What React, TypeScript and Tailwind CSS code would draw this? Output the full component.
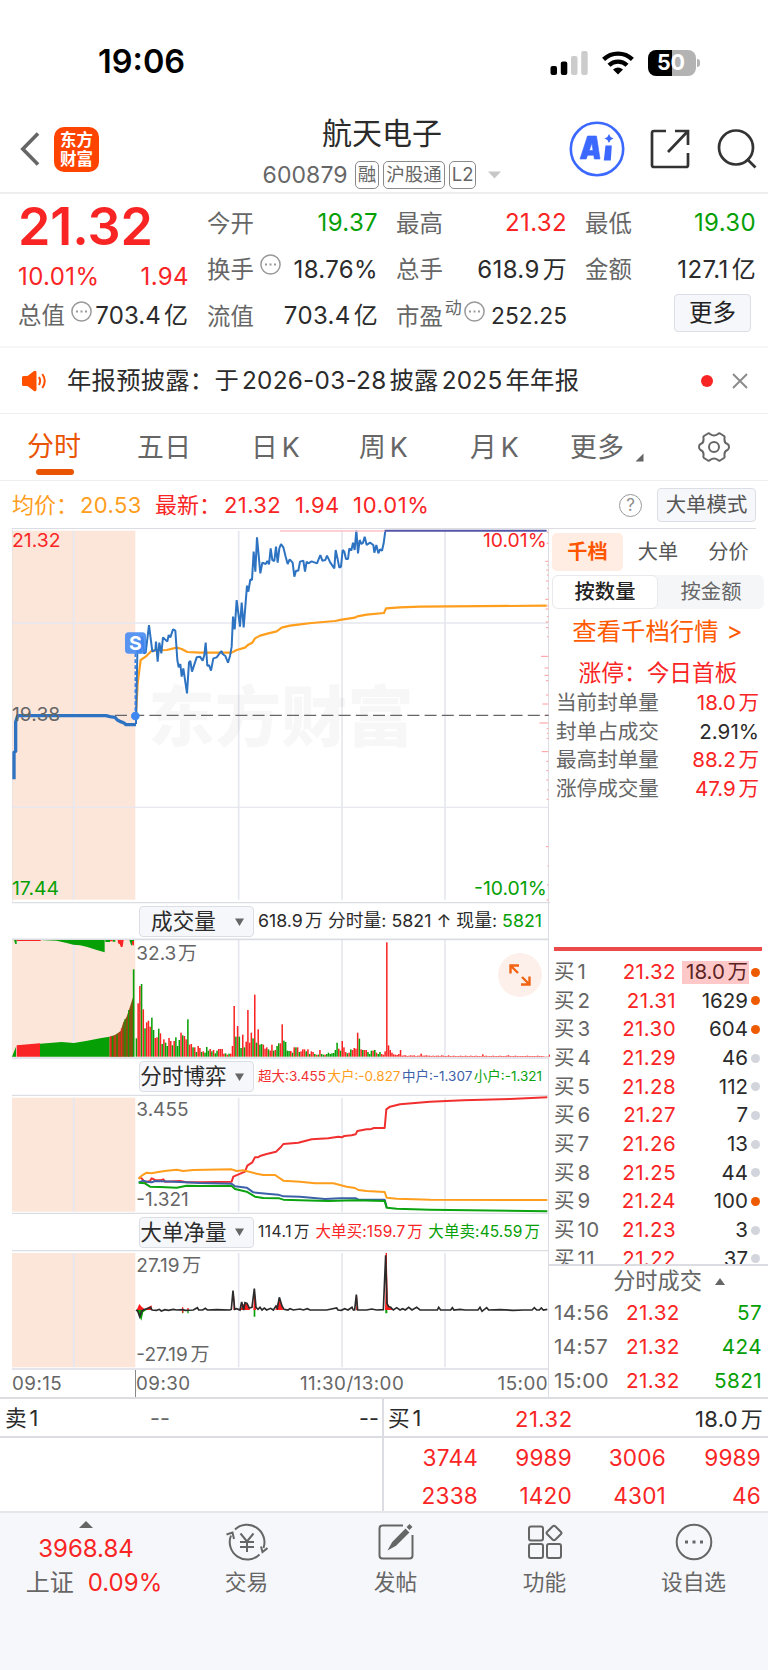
import type { ReactNode } from 'react'
import clsx from 'clsx'

type Tone = 'up' | 'down' | 'text'

const TONES: Record<Tone, string> = {
  up: 'text-[#f92525]',
  down: 'text-[#06a006]',
  text: 'text-[#2b2b2b]',
}

const BUY_ORDERS = [
  { level: 1, price: '21.32', volume: '18.0万', hot: true },
  { level: 2, price: '21.31', volume: '1629', hot: true },
  { level: 3, price: '21.30', volume: '604', hot: true },
  { level: 4, price: '21.29', volume: '46', hot: false },
  { level: 5, price: '21.28', volume: '112', hot: false },
  { level: 6, price: '21.27', volume: '7', hot: false },
  { level: 7, price: '21.26', volume: '13', hot: false },
  { level: 8, price: '21.25', volume: '44', hot: false },
  { level: 9, price: '21.24', volume: '100', hot: true },
  { level: 10, price: '21.23', volume: '3', hot: false },
  { level: 11, price: '21.22', volume: '37', hot: false },
]

const SEAL_STATS: { label: string; value: string; tone: Tone }[] = [
  { label: '当前封单量', value: '18.0万', tone: 'up' },
  { label: '封单占成交', value: '2.91%', tone: 'text' },
  { label: '最高封单量', value: '88.2万', tone: 'up' },
  { label: '涨停成交量', value: '47.9万', tone: 'up' },
]

const TRADES = [
  { time: '14:56', price: '21.32', volume: '57' },
  { time: '14:57', price: '21.32', volume: '424' },
  { time: '15:00', price: '21.32', volume: '5821' },
]

const QUEUE = ['3744', '9989', '3006', '9989', '2338', '1420', '4301', '46']

// Chart units are a third of a pixel, x runs from 36 to 1650
const GRID_X = [221, 716, 1026, 1335]

const PRE_PRICE = '42,778 42,697 47,694 47,606 53,587 318,587 330,590 345,592 352,600 362,605 372,609 378,614 408,614'

const PRICE =
  '408,612 410,500 412,400 416,360 421,400 427,350 432,400 437,398 447,315 457,395 466,390 468,365 473,425 478,368 484,400 489,352 502,365 506,345 511,352 519,328 526,332 532,420 536,442 541,432 545,470 550,445 561,520 567,427 571,423 576,455 590,412 600,410 608,422 613,405 617,368 622,438 627,435 633,452 640,415 650,412 664,393 668,402 676,408 684,428 690,408 695,380 699,290 704,328 710,240 720,320 725,248 731,322 741,197 745,215 751,178 756,180 761,95 766,155 771,52 781,160 787,128 797,132 802,123 807,133 812,85 817,120 823,123 828,80 833,128 838,85 843,72 850,82 857,110 863,132 869,118 878,128 883,170 888,152 895,152 900,125 910,122 915,155 920,125 925,130 935,124 951,130 961,105 967,122 976,120 981,107 991,128 1003,145 1007,90 1013,118 1018,143 1023,140 1028,90 1033,95 1038,117 1044,117 1048,85 1054,92 1059,68 1064,90 1069,30 1074,100 1079,60 1084,72 1089,68 1094,50 1100,75 1110,68 1120,75 1123,98 1129,75 1135,100 1140,88 1146,92 1151,70 1156,32'

const AVERAGE =
  '408,586 413,490 422,420 437,410 455,392 500,390 530,383 545,387 562,396 600,398 695,398 710,390 735,383 745,374 757,368 765,355 780,347 805,340 830,334 845,323 870,317 900,313 935,309 1005,303 1025,299 1065,293 1072,289 1100,284 1152,279 1158,265 1200,262 1260,260 1640,257'

const PRICE_TICKS = [
  [37, 4], [70, 5], [124, 9], [135, 4], [150, 6], [165, 4], [183, 7], [205, 4], [238, 9], [258, 5], [267, 8], [290, 4],
  [306, 8], [323, 7], [350, 4], [409, 22], [444, 11], [466, 11], [482, 7], [525, 7], [552, 18], [586, 12], [609, 27],
  [626, 5], [640, 4], [655, 5], [695, 20], [724, 6], [752, 6], [780, 6], [810, 4], [838, 5], [980, 7], [1038, 3],
  [1095, 4], [1140, 5],
]

// One entry per minute: bar height, then r or g
const VOLUME =
  '55g 160r 212r 218g 142r 85g 103r 108r 90r 117g 80g 56r 58r 84g 70r 38g 52r 42g 32g 56r 47r 34g 47r 58g 32g 50g 72r 64g 62r 52r 112g 36r 38r 28g 28r 14g 32r 26r 14g 16r 12g 29g 18g 23r 16g 20r 10g 18g 23r 23r 23r 9r 10g 6r 9g 9r 32r 152r 60g 92r 60g 26g 66r 28g 45r 140r 42r 72r 55g 186r 42g 82r 36g 38g 36r 24r 28r 22g 18r 36r 18g 20r 32g 40g 40r 97r 48g 44g 18g 17g 17r 12g 28r 28g 28r 14g 16r 22r 22r 16g 22r 8g 16r 14r 8g 6r 6g 20r 8g 6g 6r 8g 12g 8g 10g 11g 20g 42g 24r 18g 47r 28r 14r 10g 12r 22g 20r 26r 24r 72r 54g 22r 20g 20r 20r 14g 8g 18g 18r 20g 12r 8g 14g 8r 6r 16r 343r 34r 20r 12r 7r 6r 5r 8r 20r 3r 4r 4r 2r 3r 4r 3r 4r 2r 3r 3r 9r 3r 3r 4r 3r 3r 2r 3r 2r 3r 3r 2r 4r 3r 2r 2r 4r 2r 2r 3r 2r 2r 2r 3r 2r 2r 3r 2r 2r 3r 2r 2r 3r 2r 2r 2r 7r 2r 3r 2r 2r 2r 3r 2r 2r 2r 3r 2r 2r 2r 3r 4r 2r 2r 2r 3r 2r 2r 2r 2r 2r 2r 3r 2r 2r 2r 2r 2r 3r 2r 2r 2r 1r 1r 1r 6r'

const FLOWS = [
  {
    color: '#f12f2f',
    points:
      '416,847 425,850 435,862 450,858 455,850 465,855 480,856 490,853 495,860 540,858 560,862 600,862 695,860 700,845 735,830 742,812 757,802 765,787 775,787 780,783 800,777 828,770 842,757 850,747 895,743 935,733 985,730 1015,725 1025,727 1033,723 1055,721 1067,718 1072,708 1100,703 1110,703 1122,699 1154,699 1159,643 1170,635 1200,628 1290,620 1390,616 1530,612 1642,607',
  },
  {
    color: '#ff9d1c',
    points:
      '416,852 425,842 440,833 455,835 470,832 500,827 530,824 550,828 580,825 695,823 710,828 730,826 770,836 790,840 825,840 840,850 850,857 900,860 945,865 1000,865 1040,875 1065,879 1075,885 1100,888 1154,891 1160,908 1190,911 1290,914 1642,915',
  },
  {
    color: '#3c61a8',
    points:
      '416,862 430,857 440,860 455,862 465,858 540,861 600,864 695,866 705,874 740,878 760,892 800,896 835,899 850,904 900,905 975,912 1020,910 1068,910 1075,914 1154,914 1160,937',
  },
  {
    color: '#0ba30f',
    points:
      '416,863 435,865 450,875 480,876 530,878 560,872 600,873 695,873 705,882 740,890 765,905 790,909 838,910 850,914 900,916 985,918 1065,916 1154,918 1160,938 1190,941 1290,944 1642,949',
  },
]

const NET =
  '408,60 413,63 419,80 425,64 431,59 440,56 452,52 456,60 470,61 478,58 484,63 495,59 505,61 520,58 530,60 548,59 556,61 580,60 592,53 596,60 608,60 616,55 622,60 650,59 690,60 694,58 699,2 704,58 710,56 720,60 725,36 731,60 735,38 741,40 748,54 756,52 763,-4 768,52 774,58 780,52 786,60 793,54 800,60 812,55 820,60 828,48 832,54 838,22 846,48 852,58 864,60 870,56 880,60 900,57 910,60 922,56 930,60 980,60 1010,54 1014,60 1024,61 1034,56 1044,60 1056,52 1060,60 1064,60 1069,14 1073,60 1100,60 1115,57 1130,60 1150,59 1157,-104 1161,40 1166,50 1172,52 1180,60 1190,53 1200,60 1208,56 1216,60 1226,52 1236,60 1250,52 1260,60 1270,60 1312,60 1316,52 1322,60 1352,60 1357,53 1362,60 1380,58 1395,60 1434,60 1440,52 1446,64 1460,53 1466,60 1500,59 1540,61 1570,60 1596,60 1603,53 1610,60 1618,60 1624,54 1630,60 1642,58'

function StatusBar() {
  return (
    <div className="flex h-[104px] items-center pt-[21px] pl-[98px]">
      <span className="w-[452px] text-[32.5px] leading-none font-semibold text-black">19:06</span>
      <svg width="38" height="24" viewBox="0 0 38 24">
        <rect x="0.5" y="15" width="6.5" height="9" rx="2" fill="#000" />
        <rect x="10.8" y="10.5" width="6.5" height="13.5" rx="2" fill="#000" />
        <rect x="21" y="5" width="6.5" height="19" rx="2" fill="#ccc" />
        <rect x="31.2" y="0" width="6.5" height="24" rx="2" fill="#ccc" />
      </svg>
      <svg className="ml-[14px]" width="32" height="24" viewBox="0 0 32 24" fill="none" stroke="#000" strokeWidth="4.3">
        <path d="M1.6 8.4A20.6 20.6 0 0 1 30.4 8.4" />
        <path d="M7 14.3A12.9 12.9 0 0 1 25 14.3" />
        <path d="M11 18.6Q16 14.6 21 18.6L16 23.6Z" fill="#000" stroke="none" />
      </svg>
      <div className="relative ml-[14px] flex h-[26px] w-[48px] items-center justify-center rounded-[8px] bg-[linear-gradient(90deg,#000_50%,#b3b3b3_50%)] pr-[2px] text-[21.5px] leading-none font-bold text-white">
        50
        <span className="absolute top-[9px] -right-[4px] h-[8px] w-[3px] rounded-r-full bg-[#b3b3b3]" />
      </div>
    </div>
  )
}

function Tag({ children }: { children: ReactNode }) {
  return (
    <span className="flex h-[28px] items-center rounded-[5px] border border-[#8a8a8a] px-[2px] text-[18.5px] text-[#666]">
      {children}
    </span>
  )
}

function NavBar() {
  return (
    <div className="grid h-[90px] grid-cols-[200px_1fr_200px] border-b-2 border-[#eee]">
      <div className="flex items-center pt-[2px] pl-[20px]">
        <svg width="20" height="34" viewBox="0 0 20 34" fill="none" stroke="#666" strokeWidth="3.6">
          <path d="M18 1.5L2.8 17L18 32.5" />
        </svg>
        <div className="ml-[14px] flex size-[45px] flex-col items-center justify-center rounded-[10px] bg-[#ff4400] font-['Noto_Sans_CJK_SC',sans-serif] text-[16.5px] leading-[19px] font-bold text-white">
          <span>东方</span>
          <span>财富</span>
        </div>
      </div>
      <div className="flex flex-col items-center pt-[9px] pr-[4px]">
        <h1 className="text-[30px] leading-[40px] text-[#2b2b2b]">航天电子</h1>
        <div className="mt-[5px] flex items-center gap-[4px]">
          <span className="mr-[3px] text-[23px] tracking-[0.1px] text-[#666]">600879</span>
          <Tag>融</Tag>
          <Tag>沪股通</Tag>
          <Tag>L2</Tag>
          <svg className="ml-[8px]" width="13" height="8" viewBox="0 0 13 8">
            <path d="M0 0.5H13L6.5 7.5Z" fill="#c8c8c8" />
          </svg>
        </div>
      </div>
      <div className="flex items-center justify-end pt-[2px] pr-[11px]">
        <svg width="56" height="56" viewBox="0 0 56 56">
          <circle cx="28" cy="28" r="26.2" fill="#fff" stroke="#3b68ff" strokeWidth="2.6" />
          <path
            d="M18.5 15H27.5L31 38H25.3L24.8 34.3H18.6L17.2 38H11ZM22.9 22L20.3 29.5H24Z"
            fill="#3b68ff"
            fillRule="evenodd"
            stroke="#3b68ff"
            strokeWidth="0.6"
            strokeLinejoin="round"
          />
          <path d="M36.5 24.5H42.8L41.8 39.5H34.8Z" fill="#3b68ff" />
          <path d="M40 13L41.6 15.9L44.5 17.5L41.6 19.1L40 22L38.4 19.1L35.5 17.5L38.4 15.9Z" fill="#3b68ff" />
        </svg>
        <svg className="ml-[25px]" width="40" height="40" viewBox="0 0 40 40" fill="none" stroke="#333" strokeWidth="2.7">
          <path d="M16 2H4Q2 2 2 4V36Q2 38 4 38H36Q38 38 38 36V24" />
          <path d="M25 2H38V16M38 2L18 23" />
        </svg>
        <svg className="ml-[27px]" width="40" height="40" viewBox="0 0 40 40" fill="none" stroke="#333" strokeWidth="2.7">
          <circle cx="19" cy="18.5" r="17" />
          <path d="M30 30L38.5 38.5" />
        </svg>
      </div>
    </div>
  )
}

function InfoDots() {
  return (
    <svg width="21" height="21" viewBox="0 0 21 21" fill="none" className="shrink-0">
      <circle cx="10.5" cy="10.5" r="9.6" stroke="#999" strokeWidth="1.5" />
      <path d="M5 9.4h2v2h-2zM9.5 9.4h2v2h-2zM14 9.4h2v2h-2z" fill="#999" />
    </svg>
  )
}

function Quote({ label, value, tone = 'text', small }: { label: ReactNode; value: string; tone?: Tone; small?: boolean }) {
  return (
    <div className="-mr-px flex h-[46.5px] items-center justify-between">
      <span className="flex items-center text-[23.4px] text-[#666]">{label}</span>
      <span className={clsx(small ? 'text-[22.8px]' : 'text-[24px] tracking-[0.35px]', TONES[tone])}>{value}</span>
    </div>
  )
}

function QuotePanel() {
  return (
    <div className="grid h-[154px] grid-cols-[repeat(4,170px)] gap-x-[19px] border-b-2 border-[#f6f6f6] pt-[6px] pl-[18px] leading-none">
      <div>
        <div className="flex h-[53px] items-center text-[52px] font-semibold tracking-[-0.1px] text-[#f92525]">21.32</div>
        <div className="-mr-px flex h-[47px] items-center justify-between text-[24px] tracking-[0.4px] text-[#f92525]">
          <span>10.01%</span>
          <span>1.94</span>
        </div>
        <div className="flex h-[32px] items-center justify-between text-[24px] tracking-[0.1px]">
          <span className="flex items-center gap-[6px] text-[23.4px] text-[#666]">
            总值
            <span className="pb-[10px]"><InfoDots /></span>
          </span>
          <span className="text-[#2b2b2b]">703.4亿</span>
        </div>
      </div>
      <div>
        <Quote label="今开" value="19.37" tone="down" />
        <Quote
          label={
            <>
              换手<span className="ml-[6px] pb-[10px]"><InfoDots /></span>
            </>
          }
          value="18.76%"
        />
        <Quote label="流值" value="703.4亿" />
      </div>
      <div>
        <Quote label="最高" value="21.32" tone="up" />
        <Quote label="总手" value="618.9万" />
        <Quote
          label={
            <>
              市盈
              <span className="ml-[2px] pb-[15px] text-[17px]">动</span>
              <span className="ml-[2px] pb-[10px]"><InfoDots /></span>
            </>
          }
          value="252.25"
          small
        />
      </div>
      <div>
        <Quote label="最低" value="19.30" tone="down" />
        <Quote label="金额" value="127.1亿" />
        <button className="mt-px ml-auto mr-[4px] flex h-[38px] w-[77px] items-center justify-center rounded-[4px] border border-[#dcdee5] bg-[#f6f7fa] text-[23.5px] text-[#222]">
          更多
        </button>
      </div>
    </div>
  )
}

function Notice() {
  return (
    <div className="flex h-[66px] items-center border-b border-[#eee] pl-[21px]">
      <svg width="26" height="22" viewBox="0 0 26 22">
        <path d="M1 7.5Q1 6 2.5 6H6.5L13 1Q15.5 0 15.5 2.5V19.5Q15.5 22 13 21L6.5 16H2.5Q1 16 1 14.5Z" fill="#ff5000" />
        <path d="M18 7Q20.2 11 18 15M21.3 4Q26.2 11 21.3 18" fill="none" stroke="#ff5000" strokeWidth="2" />
      </svg>
      <p className="ml-[20px] w-[634px] text-[24.3px] tracking-[0.27px] text-[#2b2b2b]">年报预披露：于2026-03-28披露2025年年报</p>
      <span className="size-[12px] rounded-full bg-[#f92525]" />
      <svg className="ml-[19px]" width="16" height="16" viewBox="0 0 16 16" stroke="#8c8c8c" strokeWidth="2">
        <path d="M1 1L15 15M15 1L1 15" />
      </svg>
    </div>
  )
}

function PeriodTabs() {
  return (
    <div className="flex h-[67px] items-center border-b border-[#eee] pl-[27px] text-[26.8px] tracking-[0.5px] text-[#666]">
      <div className="relative flex h-full w-[110px] items-center text-[27px] tracking-normal text-[#ea5504]">
        分时
        <span className="absolute bottom-[5px] left-[9px] h-[6px] w-[38px] rounded-full bg-[#ea5504]" />
      </div>
      <span className="w-[114px]">五日</span>
      <span className="w-[108px]">日K</span>
      <span className="w-[111px]">周K</span>
      <span className="w-[100px]">月K</span>
      <span className="w-[56px]">更多</span>
      <svg className="mt-[21px] ml-[9px]" width="9" height="9" viewBox="0 0 9 9">
        <path d="M8.5 0.5V8.5H0.5Z" fill="#666" />
      </svg>
      <svg className="ml-[54px]" width="32" height="30" viewBox="0 0 32 30" fill="none" stroke="#666" strokeWidth="2">
        <path d="M10 1.5Q11 1 12 2Q16 5 20 2Q21 1 22 1.5L26 4Q27 5 26.5 6.2Q26 11 29.5 12Q31 12.8 31 15Q31 17.2 29.5 18Q26 19 26.5 23.8Q27 25 26 26L22 28.5Q21 29 20 28Q16 25 12 28Q11 29 10 28.5L6 26Q5 25 5.5 23.8Q6 19 2.5 18Q1 17.2 1 15Q1 12.8 2.5 12Q6 11 5.5 6.2Q5 5 6 4Z" />
        <circle cx="16" cy="15" r="5" />
      </svg>
    </div>
  )
}

function PriceLegend() {
  return (
    <div className="flex h-[47px] items-center pt-px pl-[12px] text-[22px] tracking-[0.4px] text-[#f92525]">
      <span className="w-[68px] tracking-normal text-[#ff9d1c]">均价：</span>
      <span className="w-[75px] text-[#ff9d1c]">20.53</span>
      <span className="w-[69px] tracking-normal">最新：</span>
      <span className="w-[71px]">21.32</span>
      <span className="w-[58px]">1.94</span>
      <span className="w-[266px] tracking-[0.7px]">10.01%</span>
      <span className="flex size-[23px] items-center justify-center rounded-full border-[1.5px] border-[#999] text-[17px] leading-none tracking-normal text-[#8c8c8c]">
        ?
      </span>
      <button className="ml-[15px] flex h-[34px] w-[99px] items-center justify-center rounded-[4px] border border-[#dcdee5] bg-[#f6f7fa] text-[20.4px] tracking-normal text-[#555]">
        大单模式
      </button>
    </div>
  )
}

function Grid({ top, bottom }: { top: number; bottom: number }) {
  return (
    <>
      <rect x="36" y={top} width="370" height={bottom - top} fill="#fce6da" />
      {GRID_X.map(x => (
        <path key={x} d={`M${x} ${top}V${bottom}`} stroke="#e6e7ef" strokeWidth="5" />
      ))}
    </>
  )
}

function PriceChart() {
  return (
    <svg className="block" width="538" height="376" viewBox="36 24 1614 1128" fontSize="58">
      <path d="M36 25H1650M36 1148H1650" stroke="#dcdde3" strokeWidth="4" />
      <Grid top={32} bottom={1139} />
      <path d="M36 309H1646M36 862H1646" stroke="#e6e7ef" strokeWidth="4" />
      <path d="M37 25V1148" stroke="#dcdde3" strokeWidth="2" />
      <text x="445" y="664" fontSize="199" fontWeight="900" fill="#000" fillOpacity="0.033">东方财富</text>
      {PRICE_TICKS.map(([y, len]) => (
        <path key={y} d={`M${1645 - len} ${y}H1645`} stroke="#ff9a9a" strokeWidth="3" />
      ))}
      <path d="M345 586H1646" stroke="#666" strokeWidth="4" strokeDasharray="36 15.6" />
      <polyline points={AVERAGE} fill="none" stroke="#ff9d1c" strokeWidth="6.5" strokeLinejoin="round" />
      <polyline points={PRE_PRICE} fill="none" stroke="#2d73c2" strokeWidth="10" strokeLinejoin="round" />
      <polyline points={PRICE} fill="none" stroke="#2d73c2" strokeWidth="6" strokeLinejoin="bevel" />
      <path d="M840 33H1156" stroke="#ffc2c6" strokeWidth="5" />
      <path d="M1154 32H1640" stroke="#5555a8" strokeWidth="6" />
      <path d="M406 400V586" stroke="#3a80e8" strokeWidth="5" strokeDasharray="11 7" />
      <circle cx="406" cy="588" r="13" fill="#3f88f3" />
      <rect x="375" y="337" width="63" height="64" rx="11" fill="#4389f2" fillOpacity="0.88" />
      <text x="406" y="390" textAnchor="middle" fontWeight="700" fill="#fff">S</text>
      <text x="36" y="82" fill="#f92525">21.32</text>
      <text x="36" y="603" fill="#666">19.38</text>
      <text x="36" y="1125" fill="#06a006">17.44</text>
      <text x="1640" y="82" textAnchor="end" fill="#f92525">10.01%</text>
      <text x="1640" y="1125" textAnchor="end" fill="#06a006">-10.01%</text>
    </svg>
  )
}

function VolumeChart() {
  return (
    <div className="relative h-[121px]">
      <svg className="block" width="538" height="121" viewBox="36 129 1614 363" fontSize="57">
        <Grid top={135} bottom={485} />
        <path d="M36 133H1646M36 489H1646" stroke="#dcdde3" strokeWidth="5" />
        <path d="M50 485V451L85 448L120 445V485Z" fill="#f92525" />
        <path d="M36 485L48 455V485ZM120 485V446L185 441L222 444L262 437L300 430L328 425V485Z" fill="#06a006" />
        <path d="M328 485V425L345 420L362 408L370 382L380 365L390 335L400 303V485Z" fill="#87520f" />
        <path d="M332 485V424M345 485V422M357 485V414M364 485V400" stroke="#f92525" strokeWidth="3" />
        <path d="M338 485V423M351 485V418M375 485V372M386 485V345" stroke="#06a006" strokeWidth="3" />
        <path d="M401 485V223" stroke="#06a006" strokeWidth="5" />
        <path d="M42 135H50V147H46ZM120 135H314V172L290 165L262 156L240 151L220 149L200 144L170 137ZM316 135H330V141H316ZM338 135H346V140H338ZM370 135H388L394 152L402 140V135Z" fill="#06a006" />
        <path d="M50 135H122V138H50ZM330 135H338V139H330ZM353 135H371L368 155L363 157L359 147L354 145ZM396 138H402V151H397Z" fill="#f92525" />
        {VOLUME.split(' ').map((bar, i) => {
          const height = parseInt(bar, 10)
          return (
            <rect
              key={i}
              x={407 + i * 5.145}
              y={485 - height}
              width="4.6"
              height={height}
              fill={bar.endsWith('r') ? '#f92525' : '#06a006'}
            />
          )
        })}
        <text x="409" y="196" fill="#666">
          32.3<tspan dx="5">万</tspan>
        </text>
      </svg>
      <button className="absolute top-[15px] left-[486px] flex size-[44px] items-center justify-center rounded-full bg-[#fdf0ea]">
        <svg width="22" height="22" viewBox="0 0 22 22" fill="none" stroke="#f06414" strokeWidth="2.4">
          <path d="M1.5 9.5V1.5H10M1.5 1.5L9 9M20.5 12.5V20.5H12M20.5 20.5L13 13" />
        </svg>
      </button>
    </div>
  )
}

function FlowChart() {
  return (
    <svg className="block" width="538" height="120" viewBox="36 597 1614 360" fontSize="57">
      <Grid top={608} bottom={950} />
      <path d="M36 601H1646M36 955H1646" stroke="#dcdde3" strokeWidth="4" />
      {FLOWS.map(flow => (
        <polyline key={flow.color} points={flow.points} fill="none" stroke={flow.color} strokeWidth="6" strokeLinejoin="round" />
      ))}
      <text x="409" y="662" fill="#666">3.455</text>
      <text x="409" y="932" fill="#666">-1.321</text>
    </svg>
  )
}

function NetChart() {
  return (
    <svg className="block" width="538" height="120" viewBox="36 -120 1614 360" fontSize="57">
      <Grid top={-111} bottom={232} />
      <path d="M36 -118H1646M36 237H1646" stroke="#dcdde3" strokeWidth="4" />
      <path
        d="M410 60L418 42L425 50L434 58L455 46V60ZM700 60L702 16L706 60ZM720 60L727 46L735 40L742 42L750 60ZM760 60L764 -6L768 60ZM826 60L838 26L850 60ZM1068 60L1072 16V60ZM1155 60L1160 -110L1164 44L1180 60Z"
        fill="#ff1c1c"
      />
      <path d="M410 60L424 92L430 66L440 60ZM761 60H766V80H761ZM1156 60H1162V70H1156ZM546 60H550V70H546ZM562 60H566V70H562Z" fill="#06a006" />
      <path d="M548 52V68M564 54V60M1159 -111V-20" stroke="#ff1c1c" strokeWidth="4" />
      <polyline points={NET} fill="none" stroke="#2b2b2b" strokeWidth="5" />
      <text x="409" y="-55" fill="#666">
        27.19<tspan dx="8">万</tspan>
      </text>
      <text x="409" y="214" fill="#666">
        -27.19<tspan dx="8">万</tspan>
      </text>
    </svg>
  )
}

function IndicatorHeader({ name, className, children }: { name: string; className: string; children: ReactNode }) {
  return (
    <div className={clsx('flex items-center', className)}>
      <button className="ml-[127px] flex h-[31px] w-[115px] shrink-0 items-center rounded-[4px] border border-[#dcdee5] bg-[#f6f7fa] text-[21.6px] tracking-normal text-[#2b2b2b]">
        <span className="w-[87px] text-center whitespace-nowrap">{name}</span>
        <svg className="ml-[8px]" width="9" height="8" viewBox="0 0 9 8">
          <path d="M0 0.5H9L4.5 8Z" fill="#666" />
        </svg>
      </button>
      <div className="ml-[4px] flex w-[284px] items-center justify-between whitespace-nowrap">{children}</div>
    </div>
  )
}

function Charts() {
  return (
    <div className="w-[549px] border-r border-[#dcdde3] pl-[12px] [&_svg]:[text-autospace:no-autospace]">
      <PriceChart />
      <IndicatorHeader name="成交量" className="h-[34px] pt-px text-[17.8px] text-[#2b2b2b]">
        <span>618.9万</span>
        <span>分时量:</span>
        <span>5821</span>
        <span>↑</span>
        <span>现量:</span>
        <span className="text-[#06a006]">5821</span>
      </IndicatorHeader>
      <VolumeChart />
      <IndicatorHeader name="分时博弈" className="h-[35px] text-[13.5px]">
        <span className="text-[#f12f2f]">超大:3.455</span>
        <span className="text-[#ff9d1c]">大户:-0.827</span>
        <span className="text-[#3c61a8]">中户:-1.307</span>
        <span className="text-[#0ba30f]">小户:-1.321</span>
      </IndicatorHeader>
      <FlowChart />
      <IndicatorHeader name="大单净量" className="h-[36px] text-[15.5px] tracking-[0.1px]">
        <span className="tracking-[0.5px] text-[#2b2b2b]">114.1万</span>
        <span className="text-[#f92525]">大单买:159.7万</span>
        <span className="mr-[2px] text-[#06a006]">大单卖:45.59万</span>
      </IndicatorHeader>
      <NetChart />
      <div className="flex h-[27px] items-center pt-px text-[18.8px] tracking-[0.45px] text-[#666]">
        <span className="w-[123px]">09:15</span>
        <span className="-mt-px flex h-[27px] w-[165px] items-center border-l border-[#888] pt-px">09:30</span>
        <span>11:30/13:00</span>
        <span className="ml-auto">15:00</span>
      </div>
    </div>
  )
}

function OrderBook() {
  return (
    <div className="w-[219px] leading-none">
      <div className="h-px w-[207px] bg-[#dcdde3]" />
      <div className="mt-[4px] ml-[3px] flex h-[38px] items-center text-[20.2px] text-[#555]">
        <span className="flex h-full w-[71px] items-center justify-center rounded-[5px] bg-[#ffece2] font-bold text-[#ff5500]">千档</span>
        <span className="w-[70px] text-center">大单</span>
        <span className="w-[71px] text-center">分价</span>
      </div>
      <div className="mt-[4px] ml-[3px] flex h-[34px] w-[212px] rounded-[6px] bg-[#f5f6f8] text-[20.3px] text-[#666]">
        <span className="flex w-[106px] items-center justify-center rounded-[6px] border border-[#e8e9ec] bg-white font-medium text-[#222]">
          按数量
        </span>
        <span className="flex w-[106px] items-center justify-center">按金额</span>
      </div>
      <div className="flex h-[44px] items-center justify-center pr-[2px] text-[24.4px] text-[#ff5a00]">
        查看千档行情<span className="ml-[8px]">&gt;</span>
      </div>
      <div className="flex h-[35px] items-center justify-center pt-[6px] pr-px text-[22.7px] text-[#f92525]">涨停：今日首板</div>
      <div className="h-[259px] pt-px pr-[9px] pl-[7px] text-[20.6px]">
        {SEAL_STATS.map(stat => (
          <div key={stat.label} className="flex h-[28.67px] items-center justify-between">
            <span className="text-[#666]">{stat.label}</span>
            <span className={TONES[stat.tone]}>{stat.value}</span>
          </div>
        ))}
      </div>
      <div className="ml-[5px] h-[4px] w-[208px] bg-[#ea4a4a]" />
      <div className="h-[315px] overflow-hidden border-b-2 border-[#dcdde3] pt-[7px] pl-[5px] text-[20.5px]">
        {BUY_ORDERS.map(order => (
          <div key={order.level} className="flex h-[28.67px] items-center">
            <span className="w-[50px] whitespace-nowrap tracking-[0.4px] text-[#666]">买{order.level}</span>
            <span className="w-[72px] text-right tracking-[0.4px] text-[#f92525]">{order.price}</span>
            <span
              className={clsx(
                'ml-[6px] flex h-[23px] w-[67px] items-center justify-end pr-px',
                order.level === 1 ? 'bg-[#ffc8c8] text-[#5a2424]' : 'text-[#2b2b2b]'
              )}
            >
              {order.volume}
            </span>
            <span className={clsx('ml-[2px] size-[9px] rounded-full', order.hot ? 'bg-[#ee5a00]' : 'bg-[#d3d5dc]')} />
          </div>
        ))}
      </div>
      <div className="flex h-[30px] items-center justify-center pl-[21px] text-[22.2px] text-[#666]">
        分时成交
        <svg className="ml-[13px]" width="10" height="7" viewBox="0 0 10 7">
          <path d="M5 0L10 7H0Z" fill="#666" />
        </svg>
      </div>
      {TRADES.map(trade => (
        <div key={trade.time} className="flex h-[34.2px] items-center pr-[6px] pl-[5px] text-[20.7px] tracking-[0.4px]">
          <span className="w-[72px] text-[#666]">{trade.time}</span>
          <span className="text-[#f92525]">{trade.price}</span>
          <span className="ml-auto text-[#06a006]">{trade.volume}</span>
        </div>
      ))}
    </div>
  )
}

function OrderQueue() {
  return (
    <div className="flex h-[114px] border-t-2 border-[#dcdde3] leading-none">
      <div className="w-[384px] border-r-2 border-[#dcdde3]">
        <div className="flex h-[39px] items-center border-b-2 border-[#dcdde3] pt-[3px] pr-[3px] pl-[5px] text-[21.7px] text-[#2b2b2b]">
          <span className="w-[145px]">卖1</span>
          <span className="text-[#666]">--</span>
          <span className="ml-auto">--</span>
        </div>
      </div>
      <div className="flex-1">
        <div className="flex h-[39px] items-center border-b-2 border-[#dcdde3] pt-[3px] pr-[5px] pl-[4px] text-[22px] text-[#2b2b2b]">
          <span className="w-[127px] text-[21.7px]">买1</span>
          <span className="tracking-[0.5px] text-[#f92525]">21.32</span>
          <span className="ml-auto tracking-[0.3px]">18.0万</span>
        </div>
        <div className="grid grid-cols-[94px_94px_94px_95px] pt-px text-right text-[22.6px] tracking-[0.2px] text-[#f92525]">
          {QUEUE.map((lots, i) => (
            <span key={i} className="flex h-[38.5px] items-center justify-end">
              {lots}
            </span>
          ))}
        </div>
      </div>
    </div>
  )
}

function TabItem({ label, children }: { label: string; children: ReactNode }) {
  return (
    <div className="flex w-[149px] flex-col items-center pt-[8px]">
      <svg width="42" height="42" viewBox="0 0 42 42" fill="none" stroke="#666" strokeWidth="2">
        {children}
      </svg>
      <span className="mt-[7px] text-[21.7px] leading-[24px] text-[#666]">{label}</span>
    </div>
  )
}

function BottomBar() {
  return (
    <div className="flex h-[159px] border-t-2 border-[#e6e6ea] bg-[#f6f7fa]">
      <div className="flex w-[172px] flex-col items-center pt-[8px] text-[24px] text-[#f92525]">
        <svg width="14" height="7" viewBox="0 0 14 7">
          <path d="M7 0L14 7H0Z" fill="#666" />
        </svg>
        <span className="mt-[6px] leading-[30px]">3968.84</span>
        <span className="mt-[4px] pl-[16px] leading-[30px]">
          <span className="mr-[11px] text-[#666]">上证</span>0.09%
        </span>
      </div>
      <TabItem label="交易">
        <path d="M9 8.5A17.5 17.5 0 0 1 37.5 27M33.5 33.5A17.5 17.5 0 0 1 5 14.5" />
        <path d="M0.5 13.5L6.5 11.5L8 18M41.5 27L36.5 31L35 25.5" />
        <path d="M14.5 12.5L21 20.5L27.5 12.5M14 21H28M14 26H28M21 20.5V31" />
      </TabItem>
      <TabItem label="发帖">
        <path d="M28 4.5H7.5Q4.5 4.5 4.5 7.5V34.5Q4.5 37.5 7.5 37.5H34.5Q37.5 37.5 37.5 34.5V14" />
        <path d="M15 27L18 21.5L30.5 9L33 11.5L20.5 24Z" fill="#666" />
        <path d="M33 7.5L36 4.5" strokeWidth="4" />
      </TabItem>
      <TabItem label="功能">
        <rect x="5" y="5.5" width="14" height="14" rx="2" />
        <rect x="5" y="23" width="14" height="14" rx="2" />
        <rect x="23" y="23" width="14" height="14" rx="2" />
        <path d="M28.5 5.5Q30 4 31.5 5.5L37 11Q38 12 37 13L31.5 18.5Q30 20 28.5 18.5L23 13Q22 12 23 11Z" />
      </TabItem>
      <TabItem label="设自选">
        <circle cx="21" cy="21" r="17.3" />
        <path d="M12 19.5h3v3h-3zM19.5 19.5h3v3h-3zM27 19.5h3v3h-3z" fill="#666" stroke="none" />
      </TabItem>
    </div>
  )
}

export default function App() {
  return (
    <div className="h-[1670px] w-[768px] overflow-hidden bg-white font-['Inter','Noto_Sans_CJK_SC',sans-serif] [text-autospace:normal]">
      <StatusBar />
      <NavBar />
      <QuotePanel />
      <Notice />
      <PeriodTabs />
      <PriceLegend />
      <div className="flex h-[869px]">
        <Charts />
        <OrderBook />
      </div>
      <OrderQueue />
      <BottomBar />
    </div>
  )
}
